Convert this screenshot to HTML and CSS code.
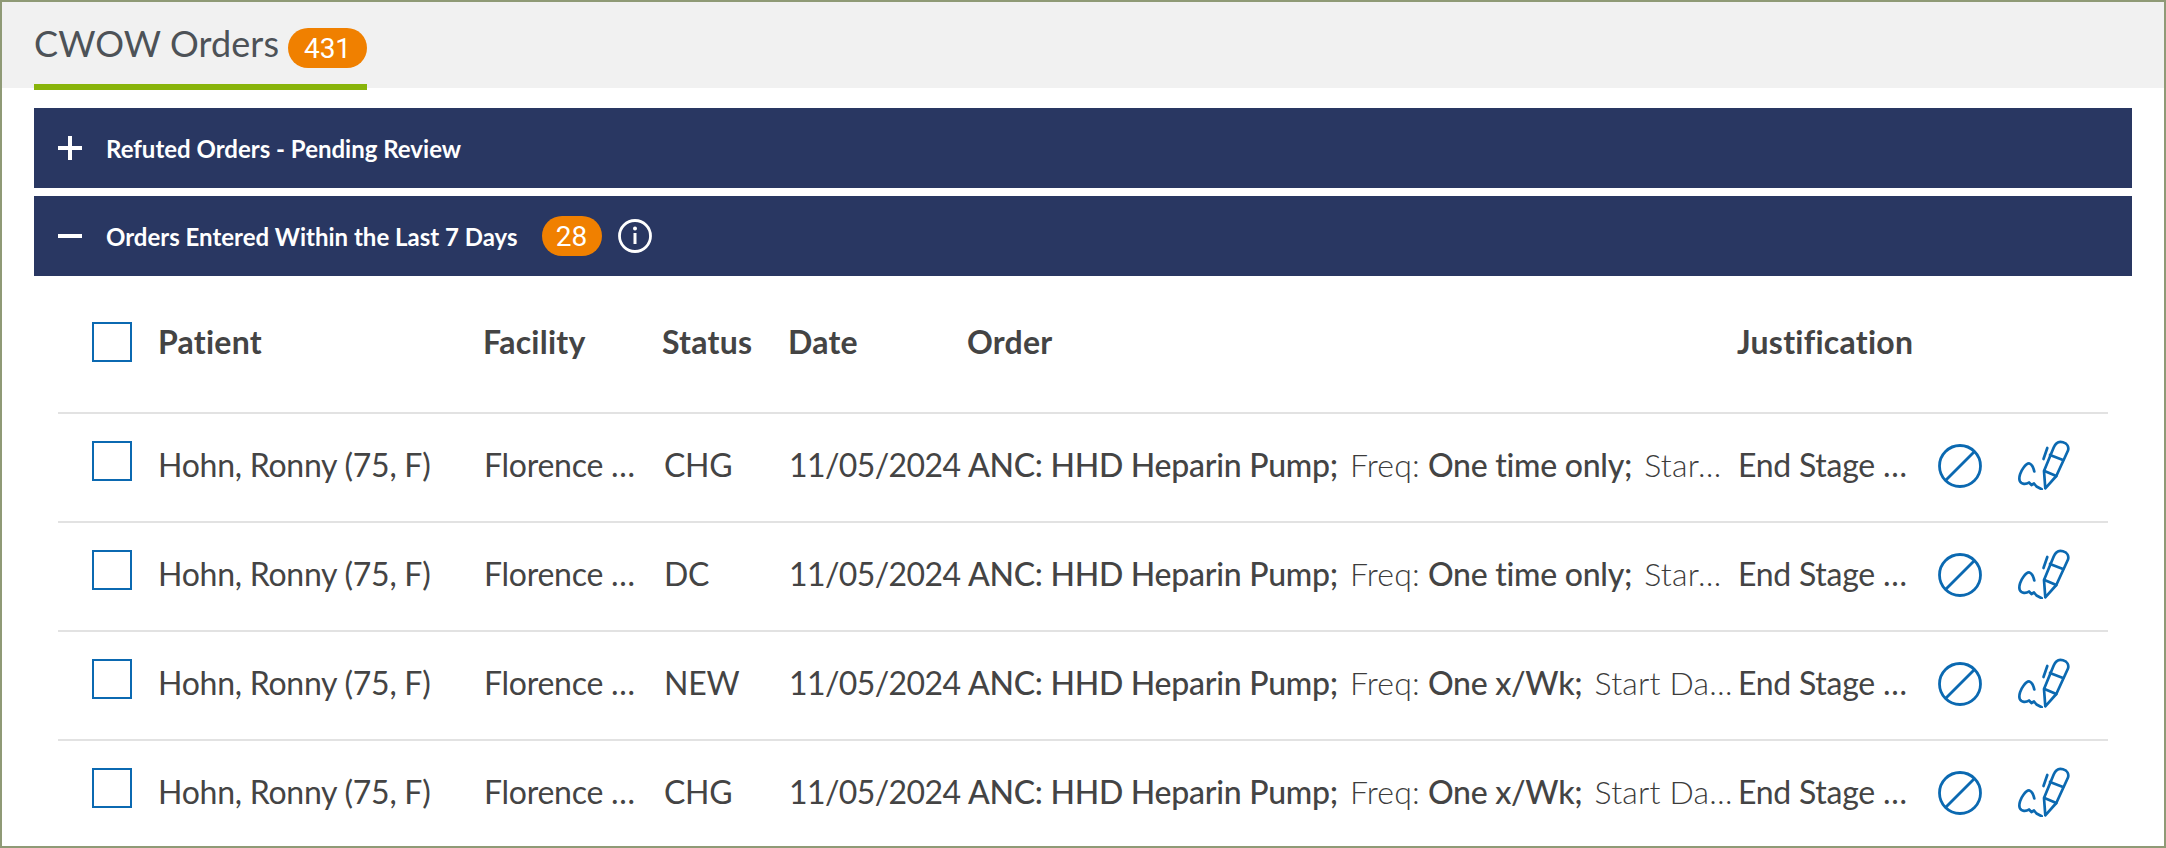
FILE: index.html
```html
<!DOCTYPE html>
<html lang="en">
<head>
<meta charset="utf-8">
<title>CWOW Orders</title>
<link rel="stylesheet" href="styles.css">
</head>
<body>
<svg class="defs" width="0" height="0" aria-hidden="true">
  <symbol id="i-block" viewBox="0 0 44 44">
    <circle cx="22" cy="22" r="20.5" fill="none" stroke="currentColor" stroke-width="2.8"/>
    <path d="M8 36 36 8" fill="none" stroke="currentColor" stroke-width="2.8"/>
  </symbol>
  <symbol id="i-sign" viewBox="0 0 52 50">
    <g fill="none" stroke="currentColor" stroke-width="2.7" stroke-linecap="round" stroke-linejoin="round">
      <path d="M27.3 48.3 26 31 35.7 7.5C37.5 3 41 1 45 2.2 49.5 3.6 51 7 50 10.5L38.3 36Z"/>
      <path d="M32 15 45 20M26.5 31 38.3 36M29.3 8 25.5 19"/>
      <path d="M23.7 49.3 18.5 46.5 16 43.5 13.5 45 11 42.5C8 44.5 3.5 44.5 1.8 41 .3 37 3 31 5.3 28 7.5 25 9.5 23 11.5 23.5 14.5 24.5 15.5 28 16.3 31.5"/>
    </g>
  </symbol>
</svg>
<div class="frame">
  <div class="tabbar">
    <div class="tab">
      <span class="tab-title">CWOW Orders</span>
      <span class="pill pill-tab">431</span>
    </div>
  </div>
  <div class="content">
    <div class="bar">
      <svg class="toggle" viewBox="0 0 24 24"><path d="M12 0V24M0 12H24" stroke="currentColor" stroke-width="4"/></svg>
      <span class="bar-title">Refuted Orders - Pending Review</span>
    </div>
    <div class="bar">
      <svg class="toggle" viewBox="0 0 24 24"><path d="M0 12H24" stroke="currentColor" stroke-width="4"/></svg>
      <span class="bar-title">Orders Entered Within the Last 7 Days</span>
      <span class="pill pill-bar">28</span>
      <svg class="info" viewBox="0 0 34 34">
        <circle cx="17" cy="17" r="15.5" fill="none" stroke="currentColor" stroke-width="2.8"/>
        <circle cx="17" cy="9.5" r="2" fill="currentColor"/>
        <path d="M17 14V25" stroke="currentColor" stroke-width="3"/>
      </svg>
    </div>
    <div class="table">
      <div class="row head">
        <span class="check"></span>
        <span class="cell">Patient</span>
        <span class="cell">Facility</span>
        <span class="cell">Status</span>
        <span class="cell">Date</span>
        <span class="cell">Order</span>
        <span class="cell">Justification</span>
      </div>
      <div class="row">
        <span class="check"></span>
        <span class="cell">Hohn, Ronny (75, F)</span>
        <span class="cell">Florence …</span>
        <span class="cell">CHG</span>
        <span class="cell date">11/05/2024</span>
        <span class="cell order"><b>ANC: HHD Heparin Pump;</b><i>Freq:</i> <b>One time only;</b><i>Star…</i></span>
        <span class="cell">End Stage …</span>
        <svg class="act-block"><use href="#i-block"/></svg>
        <svg class="act-sign"><use href="#i-sign"/></svg>
      </div>
      <div class="row">
        <span class="check"></span>
        <span class="cell">Hohn, Ronny (75, F)</span>
        <span class="cell">Florence …</span>
        <span class="cell">DC</span>
        <span class="cell date">11/05/2024</span>
        <span class="cell order"><b>ANC: HHD Heparin Pump;</b><i>Freq:</i> <b>One time only;</b><i>Star…</i></span>
        <span class="cell">End Stage …</span>
        <svg class="act-block"><use href="#i-block"/></svg>
        <svg class="act-sign"><use href="#i-sign"/></svg>
      </div>
      <div class="row">
        <span class="check"></span>
        <span class="cell">Hohn, Ronny (75, F)</span>
        <span class="cell">Florence …</span>
        <span class="cell">NEW</span>
        <span class="cell date">11/05/2024</span>
        <span class="cell order"><b>ANC: HHD Heparin Pump;</b><i>Freq:</i> <b>One x/Wk;</b><i>Start Da…</i></span>
        <span class="cell">End Stage …</span>
        <svg class="act-block"><use href="#i-block"/></svg>
        <svg class="act-sign"><use href="#i-sign"/></svg>
      </div>
      <div class="row">
        <span class="check"></span>
        <span class="cell">Hohn, Ronny (75, F)</span>
        <span class="cell">Florence …</span>
        <span class="cell">CHG</span>
        <span class="cell date">11/05/2024</span>
        <span class="cell order"><b>ANC: HHD Heparin Pump;</b><i>Freq:</i> <b>One x/Wk;</b><i>Start Da…</i></span>
        <span class="cell">End Stage …</span>
        <svg class="act-block"><use href="#i-block"/></svg>
        <svg class="act-sign"><use href="#i-sign"/></svg>
      </div>
    </div>
  </div>
</div>
</body>
</html>
```
FILE: styles.css
```css
* { box-sizing: border-box; }
html, body { margin: 0; height: 100%; overflow: hidden; }
body { font-family: Lato, "Liberation Sans", sans-serif; color: #444; background: #fff; }
.defs { position: absolute; }
.frame { height: 848px; border: 2px solid #8f9a76; overflow: hidden; }
.tabbar { height: 86px; background: #f1f1f1; padding-left: 32px; display: flex; }
.tab { width: 333px; height: 88px; padding-top: 22px; border-bottom: 6px solid #88b40a; display: flex; align-items: flex-start; justify-content: space-between; }
.tab-title { font-size: 36px; line-height: 40px; color: #4d5257; white-space: nowrap; letter-spacing: 0.1px; margin-top: -1px; }
.pill { background: #f08000; color: #fff; display: flex; align-items: center; justify-content: center; flex: none; font-family: Roboto, Lato, sans-serif; }
.pill-tab { width: 79px; height: 40px; border-radius: 20px; font-size: 28px; margin-top: 4px; }
.pill-bar { width: 60px; height: 40px; border-radius: 20px; font-size: 28px; margin-left: 24px; }
.content { padding: 20px 32px 0; }
.bar { height: 80px; background: #293762; color: #fff; display: flex; align-items: center; padding-left: 24px; margin-bottom: 8px; }
.toggle { width: 24px; height: 24px; margin-right: 24px; flex: none; }
.bar-title { font-size: 24px; font-weight: 700; }
.info { width: 34px; height: 34px; margin-left: 16px; }
.table { margin: 0 24px; }
.row { height: 109px; display: grid; grid-template-columns: 66px 326px 180px 125px 179px 770px 1fr; align-items: center; padding: 0 0 6px 34px; border-top: 2px solid #e2e2e2; position: relative; font-size: 32px; letter-spacing: -0.26px; }
.head { height: 128px; border-top: 0; font-weight: 700; padding-bottom: 14px; letter-spacing: 0.25px; }
.check { width: 40px; height: 40px; border: 2px solid #0b69b1; align-self: start; margin-top: 27px; }
.head .check { margin-top: 38px; }
.cell { white-space: nowrap; }
.head .cell ~ .cell { margin-left: -1px; }
.head .cell:nth-child(4) { margin-left: -2px; }
.date { letter-spacing: -0.6px; }
.order b { font-weight: 500; margin-right: 12px; }
.order i { font-style: normal; font-weight: 300; color: #3c3c3c; letter-spacing: 0.2px; }
.act-block, .act-sign { position: absolute; color: #0b69b1; }
.act-block { width: 44px; height: 44px; left: 1880px; top: 30px; }
.act-sign { width: 52px; height: 50px; left: 1960px; top: 26px; }
```
